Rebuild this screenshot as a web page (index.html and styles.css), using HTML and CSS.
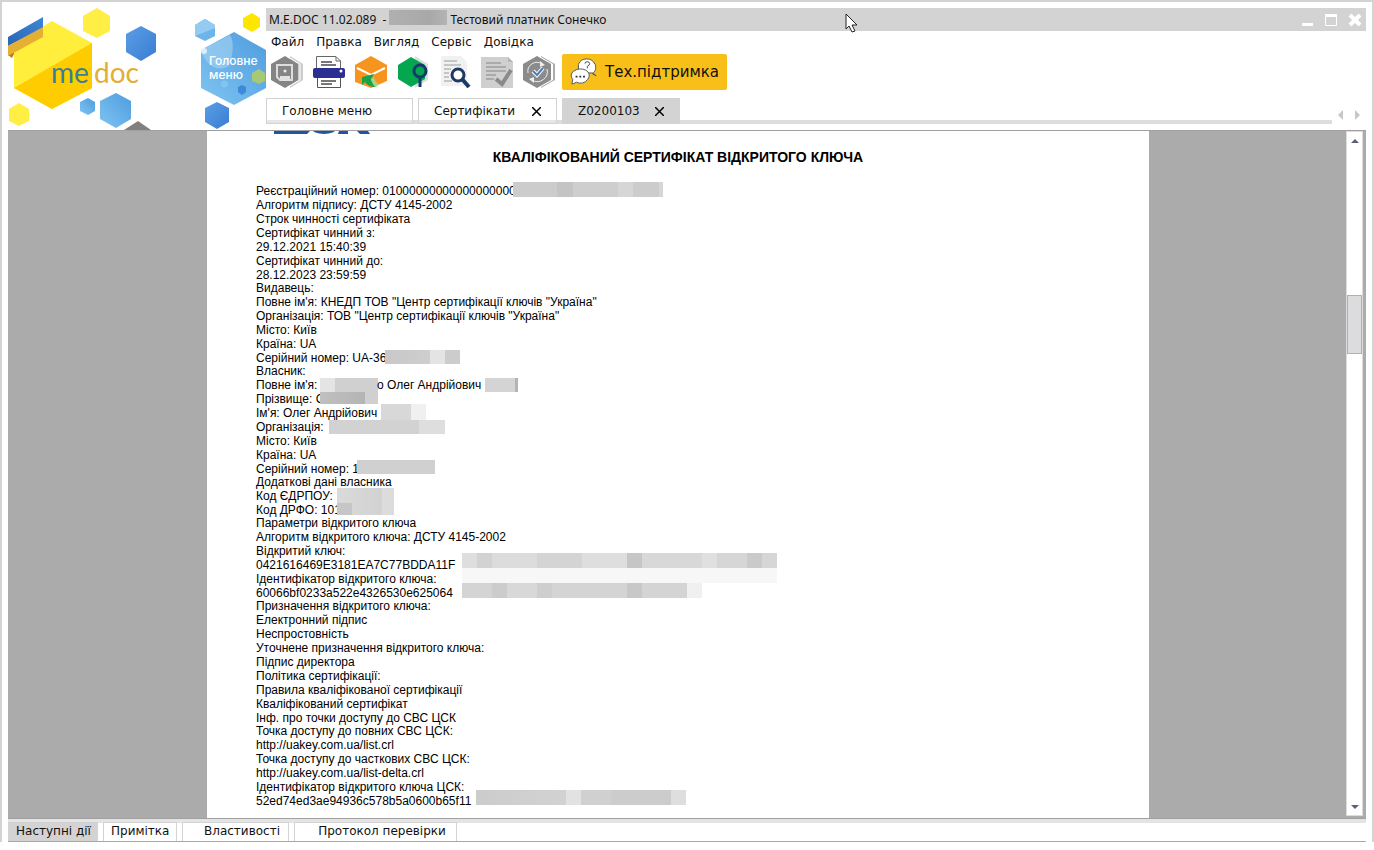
FILE: index.html
```html
<!DOCTYPE html>
<html lang="uk">
<head>
    <meta charset="UTF-8">
    <meta name="viewport" content="width=device-width, initial-scale=1.0">
    <title>M.E.DOC 11.02.089</title>
    <link rel="stylesheet" href="styles.css">
</head>
<body>
    <div class="window">
        <header class="header">
            <div class="brand">
                <svg class="logo" width="180" height="122" viewBox="8 8 180 122">
                    <defs>
                        <linearGradient id="blue" x1="0" y1="0" x2="1" y2="1">
                            <stop offset="0" stop-color="#5a9ee6"/>
                            <stop offset="1" stop-color="#3a7dd2"/>
                        </linearGradient>
                        <linearGradient id="sky" x1="1" y1="0" x2="0" y2="1">
                            <stop offset="0" stop-color="#4f9cde"/>
                            <stop offset="1" stop-color="#7fc4f2"/>
                        </linearGradient>
                        <linearGradient id="ribbon" x1="0" y1="1" x2="1" y2="0">
                            <stop offset="0" stop-color="#2a66b4"/>
                            <stop offset="1" stop-color="#3d86d6"/>
                        </linearGradient>
                    </defs>
                    <polygon fill="#b97a22" points="8,53 14,50 14,54 12,58 8,55"/>
                    <polygon fill="#ffee3c" points="52,21 92,43 92,88 52,109 14,88 14,44"/>
                    <polygon fill="#ffcc00" points="92,43 92,88 52,109 14,88"/>
                    <polygon fill="url(#ribbon)" points="8,37 43,17 43,28 8,46"/>
                    <polygon fill="#e5b032" points="8,46 43,27 43,37 8,56"/>
                    <polygon fill="#ffee44" points="97,8 110,16 110,31 97,38 83,31 83,16"/>
                    <polygon fill="url(#blue)" points="141,26 156,34 156,52 141,61 126,52 126,34"/>
                    <polygon fill="#ffee44" points="19,103 29,109 29,121 19,126 9,121 9,109"/>
                    <polygon fill="url(#sky)" points="88,98 95,102 95,111 88,115 80,111 80,102"/>
                    <polygon fill="url(#sky)" points="116,93 131,101 131,119 116,128 100,119 100,101"/>
                    <polygon fill="#808080" points="138,121 151,130 124,130"/>
                    <text class="logo-text" x="51" y="83" fill="#3a7f92">me</text>
                    <text class="logo-text" x="94" y="83" fill="#e2ae35">doc</text>
                </svg>
                <button class="main-menu" aria-label="Головне меню">
                    <svg width="78" height="122" viewBox="188 8 78 122">
                        <polygon fill="#6db4ea" points="205,19 215,25 215,36 205,41 195,36 195,25"/>
                        <polygon fill="#94cbf3" points="195,36 215,28 215,25 205,19 195,25"/>
                        <polygon fill="#ffe600" points="252,13 260,18 260,27 252,32 243,27 243,18"/>
                        <polygon fill="url(#sky)" points="234,32 266,50 266,88 234,105 201,88 201,50"/>
                        <path fill="#a5d3f3" opacity=".6" d="M201 50L230 35Q236 45 229 66Q212 75 201 52z"/>
                        <circle cx="204" cy="51" r="3" fill="#fff" opacity=".7"/>
                        <polygon fill="#a8c973" points="259,69 265,73 265,81 259,84 252,81 252,73"/>
                        <polygon fill="#82c5ec" points="224,80 228,82 228,86 224,88 221,86 221,82"/>
                        <polygon fill="#3d8ad8" points="242,85 246,87 246,92 242,95 238,92 238,87"/>
                        <polygon fill="url(#blue)" points="217,102 229,108 229,122 217,129 205,122 205,108"/>
                        <text class="menu-text" x="209" y="65">Головне</text>
                        <text class="menu-text" x="209" y="79">меню</text>
                    </svg>
                </button>
            </div>

            <div class="head-main">
                <div class="titlebar">
                    <span>M.E.DOC 11.02.089 &nbsp;-</span>
                    <span class="title-mask"></span>
                    <span>Тестовий платник Сонечко</span>
                    <div class="win-buttons">
                        <button aria-label="Згорнути"><svg width="12" height="14"><rect x="0" y="10" width="11" height="3" fill="#fff"/></svg></button>
                        <button aria-label="Розгорнути"><svg width="12" height="14"><path d="M.5 2.500V12.500H11.500V2.500z" fill="none" stroke="#fff"/><rect width="12" height="3" y="1" fill="#fff"/></svg></button>
                        <button aria-label="Закрити"><svg width="14" height="14"><path d="M2 2L12 12M12 2L2 12" stroke="#fff" stroke-width="4"/></svg></button>
                    </div>
                </div>

                <nav class="menu">
                    <button>Файл</button>
                    <button>Правка</button>
                    <button>Вигляд</button>
                    <button>Сервіс</button>
                    <button>Довідка</button>
                </nav>

                <div class="toolbar">
                    <!-- зберегти -->
                    <button class="tool" aria-label="Зберегти">
                        <svg width="32" height="32" viewBox="0 0 32 32">
                            <path d="M19 0L32 8V24L19 32z" fill="#ccc"/>
                            <path d="M17 1L29 8V24L17 31" fill="none" stroke="#fff"/>
                            <polygon points="14,0 27,8 27,24 14,32 0,24 0,8" fill="#858585"/>
                            <path d="M6 9H21V24H9L6 21z" fill="none" stroke="#ddd" stroke-width="2"/>
                            <rect x="9" y="20" width="10" height="5" fill="#e2e2e2"/>
                            <circle cx="14" cy="15" r="1.500" fill="#eee"/>
                        </svg>
                    </button>
                    <!-- друк -->
                    <button class="tool" aria-label="Друк">
                        <svg width="32" height="32" viewBox="0 0 32 32">
                            <path d="M3.500 12V.5H23L27.500 5V12" fill="#fff" stroke="#666"/>
                            <path d="M23 1V5H28" fill="none" stroke="#666"/>
                            <path d="M8 6H19M8 9H23" stroke="#777" stroke-width="2"/>
                            <path d="M4.500 20V31.500H27.500V20z" fill="#fff" stroke="#555"/>
                            <rect x="0" y="12" width="32" height="10" rx="2" fill="#2c2f92"/>
                            <path d="M8 25H23M8 28H19" stroke="#777" stroke-width="2"/>
                            <circle cx="28" cy="15" r="1.500" fill="#fff"/>
                        </svg>
                    </button>
                    <!-- відправити -->
                    <button class="tool" aria-label="Відправити">
                        <svg width="32" height="32" viewBox="0 0 32 32">
                            <polygon points="16,0 32,9 32,25 16,32 0,26 0,9" fill="#f7941d"/>
                            <path d="M2 12L16 19L30 12" fill="none" stroke="#fff" stroke-width="2"/>
                            <path d="M7 21L19 18L16 23Q17 28 21 31Q13 31 10 26L7 29z" fill="#16a34a"/>
                            <path d="M16 23Q17 28 21 31L24 28Q20 27 19 21z" fill="#a9d18e"/>
                        </svg>
                    </button>
                    <!-- знайти -->
                    <button class="tool" aria-label="Знайти">
                        <svg width="32" height="32" viewBox="0 0 32 32">
                            <path d="M18 0L31 8V24L18 32" fill="#ddd"/>
                            <polygon points="14,1 28,9 28,23 14,31 1,23 1,9" fill="#06a650"/>
                            <circle cx="23" cy="15" r="6" fill="#06a650" stroke="#123a6b" stroke-width="3"/>
                            <path d="M23 21V31" stroke="#123a6b" stroke-width="3"/>
                        </svg>
                    </button>
                    <!-- перегляд -->
                    <button class="tool" aria-label="Перегляд">
                        <svg width="32" height="32" viewBox="0 0 32 32">
                            <path d="M2 0H22L28 6V30H2z" fill="#f1f1f1"/>
                            <path d="M5 5H18M5 9H22M5 13H12M5 17H10M5 21H10M5 25H13" stroke="#9a9a9a"/>
                            <circle cx="19" cy="19" r="6" fill="#fff" stroke="#1c3868" stroke-width="3"/>
                            <path d="M23 23L30 31" stroke="#1c3868" stroke-width="4"/>
                        </svg>
                    </button>
                    <!-- підписати -->
                    <button class="tool" aria-label="Підписати">
                        <svg width="32" height="32" viewBox="0 0 32 32">
                            <path d="M0 1H27L32 6V32H0z" fill="#cfcfcf"/>
                            <path d="M27 1V6H32z" fill="#b5b5b5"/>
                            <path d="M5 7H20M5 11H25M5 15H25M5 19H15M5 23H13" stroke="#aaa" stroke-width="2"/>
                            <path d="M15 23L21 28L30 14" fill="none" stroke="#8a8a8a" stroke-width="4"/>
                        </svg>
                    </button>
                    <!-- оновити -->
                    <button class="tool" aria-label="Оновити статус">
                        <svg width="32" height="32" viewBox="0 0 32 32">
                            <path d="M18 0L32 8V24L18 32" fill="#aaa"/>
                            <path d="M16 0L30 8V24L16 32" fill="#fff"/>
                            <polygon points="14,0 28,8 28,24 14,32 0,24 0,8" fill="#8b8b8b"/>
                            <path d="M5 17A9 9 0 0 1 19 8M24 13A10 10 0 0 1 9 24" fill="none" stroke="#eee"/>
                            <path d="M17 5L22 9L17 11zM11 21L6 23L11 27z" fill="#eee"/>
                            <path d="M10 15L14 19L20 12" fill="none" stroke="#fff" stroke-width="4"/>
                            <path d="M10 15L14 19L20 12" fill="none" stroke="#4a7fb5" stroke-width="2"/>
                        </svg>
                    </button>
                    <button class="support">
                        <svg width="30" height="30" viewBox="0 0 30 30">
                            <path d="M24 17Q29 13 27 7Q24 1 18 1Q11 1 9 7V16L24 16L28 19z" fill="#fff" stroke="#555"/>
                            <path d="M2 28L3 23Q-1 18 4 14Q10 10 17 13Q23 17 19 23Q14 29 7 26z" fill="#fff" stroke="#555"/>
                            <path d="M16 6Q16 4 18.500 4Q21 4 21 6Q21 8 18.500 9V11" fill="none" stroke="#444"/>
                            <path d="M6 20H8M10 20H12M14 20H16" stroke="#333" stroke-width="2"/>
                        </svg>
                        Тех.підтримка
                    </button>
                </div>

                <div class="tabs-row">
                    <div class="tabs">
                        <button class="tab tab-home">Головне меню</button>
                        <button class="tab tab-cert">Сертифікати <svg class="x" width="9" height="9"><path d="M0 0L9 9M9 0L0 9"/></svg></button>
                        <button class="tab tab-doc active">Z0200103 <svg class="x" width="9" height="9"><path d="M0 0L9 9M9 0L0 9"/></svg></button>
                    </div>
                    <div class="tab-arrows">
                        <button aria-label="Назад"><svg width="5" height="10"><path d="M5 0V10L0 5z" fill="#c8c8c8"/></svg></button>
                        <button aria-label="Вперед"><svg width="5" height="10"><path d="M0 0V10L5 5z" fill="#c8c8c8"/></svg></button>
                    </div>
                </div>
            </div>
        </header>

        <main class="viewer">
            <div class="canvas">
                <article class="page">
                    <svg class="page-logo" width="96" height="4" viewBox="0 0 96 4">
                        <path d="M0 0H36L33 3H0zM65 0H74V3H64zM83 0H94L96 3H86z" fill="#1c589f"/>
                        <ellipse cx="50" cy="-2" rx="12" ry="5" fill="#1c589f"/>
                    </svg>
                    <h1>КВАЛІФІКОВАНИЙ СЕРТИФІКАТ ВІДКРИТОГО КЛЮЧА</h1>
                    <section>
                        <p>Реєстраційний номер: 01000000000000000000<span class="mask mask-reg"></span></p>
                        <p>Алгоритм підпису: ДСТУ 4145-2002</p>
                        <p>Строк чинності сертифіката</p>
                        <p>Сертифікат чинний з:</p>
                        <p>29.12.2021 15:40:39</p>
                        <p>Сертифікат чинний до:</p>
                        <p>28.12.2023 23:59:59</p>
                    </section>
                    <section>
                        <p>Видавець:</p>
                        <p>Повне ім'я: КНЕДП ТОВ "Центр сертифікації ключів "Україна"</p>
                        <p>Організація: ТОВ "Центр сертифікації ключів "Україна"</p>
                        <p>Місто: Київ</p>
                        <p>Країна: UA</p>
                        <p>Серійний номер: UA-36<span class="mask mask-serial"></span></p>
                    </section>
                    <section>
                        <p>Власник:</p>
                        <p>Повне ім'я:<span class="mask mask-name"></span><span class="after-name">о Олег Андрійович</span><span class="mask mask-name-end"></span></p>
                        <p>Прізвище: С<span class="mask mask-surname"></span></p>
                        <p>Ім'я: Олег Андрійович<span class="mask mask-first"></span></p>
                        <p>Організація:<span class="mask mask-org"></span></p>
                        <p>Місто: Київ</p>
                        <p>Країна: UA</p>
                        <p>Серійний номер: 1<span class="mask mask-owner"></span></p>
                    </section>
                    <section>
                        <p>Додаткові дані власника</p>
                        <p>Код ЄДРПОУ:<span class="mask mask-code"></span></p>
                        <p>Код ДРФО: 101<span class="mask mask-code-dark"></span></p>
                    </section>
                    <section>
                        <p>Параметри відкритого ключа</p>
                        <p>Алгоритм відкритого ключа: ДСТУ 4145-2002</p>
                        <p>Відкритий ключ:</p>
                        <p>0421616469E3181EA7C77BDDA11F<span class="mask mask-key"></span></p>
                        <p>Ідентифікатор відкритого ключа:<span class="mask mask-key-pale"></span></p>
                        <p>60066bf0233a522e4326530e625064<span class="mask mask-id"></span></p>
                    </section>
                    <section>
                        <p>Призначення відкритого ключа:</p>
                        <p>Електронний підпис</p>
                        <p>Неспростовність</p>
                        <p>Уточнене призначення відкритого ключа:</p>
                        <p>Підпис директора</p>
                        <p>Політика сертифікації:</p>
                        <p>Правила кваліфікованої сертифікації</p>
                        <p>Кваліфікований сертифікат</p>
                        <p>Інф. про точки доступу до СВС ЦСК</p>
                    </section>
                    <section>
                        <p>Точка доступу до повних СВС ЦСК:</p>
                        <p>http://uakey.com.ua/list.crl</p>
                        <p>Точка доступу до часткових СВС ЦСК:</p>
                        <p>http://uakey.com.ua/list-delta.crl</p>
                        <p>Ідентифікатор відкритого ключа ЦСК:</p>
                        <p>52ed74ed3ae94936c578b5a0600b65f11<span class="mask mask-csk"></span></p>
                    </section>
                </article>
            </div>
            <div class="scrollbar">
                <button aria-label="Вгору"><svg width="8" height="4"><path d="M4 0L8 4H0z" fill="#5a6078"/></svg></button>
                <div class="track"><div class="thumb"></div></div>
                <button aria-label="Вниз"><svg width="8" height="4"><path d="M0 0H8L4 4z" fill="#5a6078"/></svg></button>
            </div>
        </main>

        <footer class="bottom-tabs">
            <button class="btab btab-next active">Наступні дії</button>
            <button class="btab btab-note">Примітка</button>
            <button class="btab btab-props">Властивості</button>
            <button class="btab btab-log">Протокол перевірки</button>
        </footer>
    </div>

    <!-- курсор миші -->
    <svg class="cursor" width="14" height="21" viewBox="0 0 14 21">
        <path d="M1 1V16L4 13L7 19L10 18L7 12H12z" fill="#fff" stroke="#222"/>
    </svg>
</body>
</html>
```

FILE: styles.css
```css
* {
    margin: 0;
    padding: 0;
    box-sizing: border-box;
}

body {
    font-family: "DejaVu Sans", Verdana, sans-serif;
    font-size: 12px;
    color: #111;
    background: #fff;
    height: 100vh;
    padding-bottom: 8px;
    overflow: hidden;
}

button {
    font: inherit;
    color: inherit;
    background: none;
    border: none;
    cursor: pointer;
}

svg {
    display: block;
}

.window {
    display: flex;
    flex-direction: column;
    height: 100%;
    border: 2px solid #d3d3d3;
    border-bottom: none;
    padding: 6px 6px 0;
}

/* header */
.header {
    display: flex;
}

.brand {
    display: flex;
}

.logo-text {
    font-family: Lato, sans-serif;
    font-size: 28px;
}

.menu-text {
    font-family: Inter, sans-serif;
    font-size: 12px;
    font-weight: 500;
    fill: #fff;
}

.head-main {
    flex: 1;
    min-width: 0;
}

.titlebar {
    display: flex;
    align-items: center;
    height: 23px;
    padding: 0 4px 0 3px;
    background: #d3d3d3;
    font-family: "Noto Sans", Tahoma, sans-serif;
    font-size: 12px;
    white-space: nowrap;
}

.title-mask {
    align-self: flex-start;
    width: 58px;
    height: 15px;
    margin: 2px 3px 0;
    background: linear-gradient(90deg, #b0b0b0, #a8a8a8 70%, #b4b4b4);
}

.win-buttons {
    display: flex;
    gap: 11px;
    margin-left: auto;
}

.menu {
    display: flex;
    gap: 12px;
    height: 23px;
    padding: 0 5px 2px;
}

.toolbar {
    display: flex;
    height: 36px;
}

.tool {
    display: flex;
    align-items: center;
    justify-content: center;
    width: 42px;
}

.support {
    display: flex;
    align-items: center;
    gap: 7px;
    width: 165px;
    margin-left: 2px;
    padding: 0 8px;
    background: #f8bf18;
    border-radius: 2px;
    font-size: 15px;
    white-space: nowrap;
}

.tabs-row {
    display: flex;
    justify-content: space-between;
    height: 40px;
    padding: 8px 6px 6px 0;
}

.tabs {
    display: flex;
    flex: 1;
    gap: 5px;
    background: linear-gradient(#ddd, #ddd) bottom / 100% 4px no-repeat;
}

.tab {
    display: flex;
    align-items: center;
    justify-content: space-between;
    padding: 0 15px;
    background: linear-gradient(#fff 21px, #e6e6e6 21px);
    border: 1px solid #d3d3d3;
    white-space: nowrap;
}

.tab-home {
    width: 147px;
}

.tab-cert {
    width: 139px;
}

.tab-doc {
    width: 118px;
}

.tab.active {
    background: #d3d3d3;
}

.x {
    stroke: #000;
    stroke-width: 1.5;
}

.tab-arrows {
    display: flex;
    gap: 12px;
    align-items: center;
    padding: 8px 0 0 6px;
}

/* document area */
.viewer {
    display: flex;
    flex: 1;
    min-height: 0;
    padding-right: 3px;
    background: #ababab;
    border-top: 1px solid #a0a0a0;
    border-bottom: 1px solid #a0a0a0;
}

.canvas {
    flex: 1;
    padding: 0 197px 0 199px;
    overflow: hidden;
}

.page {
    min-height: 100%;
    padding: 0 49px;
    background: #fff;
    color: #000;
    font-family: "Liberation Sans", Arial, sans-serif;
    font-size: 12px;
    line-height: 14px;
    white-space: nowrap;
}

.page-logo {
    margin-left: 18px;
}

.page h1 {
    margin: 14px 0 19px;
    font-size: 14px;
    line-height: 16px;
    text-align: center;
}

.page section {
    margin-bottom: -1px;
}

.page p {
    position: relative;
}

/* blurred-out personal data */
.mask {
    position: absolute;
    top: 0;
    height: 14px;
    background: #d6d6d6;
}

.mask-reg {
    left: 257px;
    width: 150px;
    top: -2px;
    height: 15px;
    background: linear-gradient(90deg, #ccc 44px, #c4c4c4 44px 60px, #cecece 60px 105px, #d6d6d6 105px 120px, #ccc 120px 146px, #d6d6d6 146px);
}

.mask-serial {
    left: 129px;
    width: 75px;
    top: -1px;
    background: linear-gradient(90deg, #c8c8c8, #cecece 45px, #e4e4e4 45px 60px, #ccc 60px);
}

.mask-name {
    left: 64px;
    width: 58px;
    background: linear-gradient(90deg, #e4e4e4 15px, #d0d0d0 15px);
}

.after-name {
    position: absolute;
    left: 121px;
}

.mask-name-end {
    left: 229px;
    width: 33px;
    background: linear-gradient(90deg, #d4d4d4 30px, #b4b4b4 30px);
}

.mask-surname {
    left: 64px;
    width: 58px;
    height: 12px;
    background: linear-gradient(90deg, #c0c0c0, #b4b4b4 45px, #d0d0d0 45px);
}

.mask-first {
    left: 125px;
    width: 45px;
    top: -2px;
    height: 16px;
    background: linear-gradient(90deg, #d8d8d8 30px, #f0f0f0 30px);
}

.mask-org {
    left: 73px;
    width: 116px;
    background: linear-gradient(90deg, #d2d2d2 90px, #dedede 90px);
}

.mask-owner {
    left: 101px;
    width: 78px;
    top: -2px;
    background: #d0d0d0;
}

.mask-code {
    left: 81px;
    width: 57px;
    height: 27px;
    top: -1px;
    background: linear-gradient(90deg, #dadada, #d2d2d2 45px, #dcdcdc 45px);
}

.mask-code-dark {
    left: 81px;
    width: 15px;
    height: 12px;
    background: #c6c6c6;
}

.mask-key {
    left: 206px;
    width: 315px;
    top: -5px;
    height: 15px;
    background: linear-gradient(90deg, #dedede 15px, #d2d2d2 15px 30px, #dcdcdc 30px 75px, #d4d4d4 75px 120px, #dedede 120px 165px, #c6c6c6 165px 180px, #d8d8d8 180px 240px, #e0e0e0 240px 255px, #d6d6d6 255px 285px, #cacaca 285px 300px, #d6d6d6 300px);
}

.mask-key-pale {
    left: 206px;
    width: 315px;
    top: -4px;
    height: 15px;
    background: #f7f7f7;
}

.mask-id {
    left: 206px;
    width: 240px;
    top: -3px;
    height: 15px;
    background: linear-gradient(90deg, #d4d4d4 30px, #ccc 30px 45px, #d8d8d8 45px 75px, #cecece 75px 90px, #d4d4d4 90px 165px, #c8c8c8 165px 180px, #d4d4d4 180px 225px, #f0f0f0 225px);
}

.mask-csk {
    left: 220px;
    width: 210px;
    top: -4px;
    height: 15px;
    background: linear-gradient(90deg, #ccc, #d2d2d2 90px, #e2e2e2 90px 105px, #d0d0d0 105px 135px, #ccc 135px 195px, #dedede 195px);
}

/* scrollbar */
.scrollbar {
    display: flex;
    flex-direction: column;
    width: 17px;
    margin-bottom: 2px;
    background: #fff;
    border: 1px solid #dcdcdc;
}

.scrollbar button {
    display: flex;
    align-items: center;
    justify-content: center;
    height: 17px;
}

.track {
    flex: 1;
    padding-top: 146px;
}

.thumb {
    height: 59px;
    background: #dcdcde;
    border: 1px solid #b0b0b0;
}

/* bottom tabs */
.bottom-tabs {
    display: flex;
    gap: 5px;
    height: 23px;
    padding-top: 3px;
    background: linear-gradient(#e4e4e4, #e4e4e4) top / 100% 4px no-repeat;
    border-bottom: 1px solid #a8a8a8;
}

.btab {
    padding: 0 7px 2px;
    background: #fff;
    border: 1px solid #d3d3d3;
    border-bottom: none;
    white-space: nowrap;
}

.btab.active {
    background: #d3d3d3;
}

.btab-next {
    width: 90px;
}

.btab-note {
    width: 74px;
}

.btab-props {
    width: 107px;
    padding-left: 20px;
}

.btab-log {
    width: 163px;
    padding-left: 20px;
}

.cursor {
    position: absolute;
    left: 845px;
    top: 13px;
}
```
